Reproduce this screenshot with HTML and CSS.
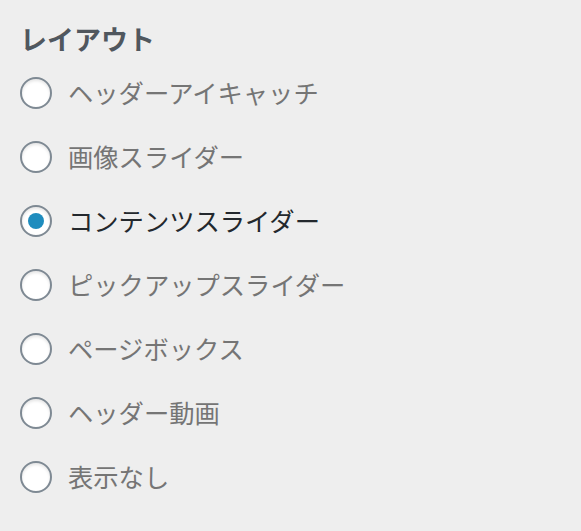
FILE: index.html
```html
<!DOCTYPE html>
<html lang="ja">
<head>
<meta charset="utf-8">
<link rel="stylesheet" href="styles.css">
</head>
<body>
<div class="panel">
  <div class="title">レイアウト</div>
  <ul class="options">
    <li class="option"><span class="radio"></span><span class="label">ヘッダーアイキャッチ</span></li>
    <li class="option"><span class="radio"></span><span class="label">画像スライダー</span></li>
    <li class="option checked"><span class="radio"></span><span class="label">コンテンツスライダー</span></li>
    <li class="option"><span class="radio"></span><span class="label">ピックアップスライダー</span></li>
    <li class="option"><span class="radio"></span><span class="label">ページボックス</span></li>
    <li class="option"><span class="radio"></span><span class="label">ヘッダー動画</span></li>
    <li class="option"><span class="radio"></span><span class="label">表示なし</span></li>
  </ul>
</div>
</body>
</html>
```
FILE: styles.css
```css
html, body {
  margin: 0;
  padding: 0;
  background: #eeeeee;
  width: 581px;
  height: 531px;
  overflow: hidden;
}
.panel {
  padding: 19px 0 0 20px;
  font-family: "Noto Sans CJK JP", "Noto Sans", sans-serif;
}
.title {
  font-size: 27px;
  font-weight: 700;
  line-height: 40px;
  color: #50575e;
  height: 42px;
}
.options {
  list-style: none;
  margin: 0;
  padding: 0;
}
.option {
  display: flex;
  align-items: center;
  height: 64px;
  gap: 16px;
}
.radio {
  box-sizing: border-box;
  width: 32px;
  height: 32px;
  border-radius: 50%;
  border: 2px solid #7e8993;
  background: #fff;
  box-shadow: inset 0 2px 3px rgba(0,0,0,0.1);
  display: flex;
  align-items: center;
  justify-content: center;
  flex: none;
}
.checked .radio::after {
  content: "";
  width: 16px;
  height: 16px;
  border-radius: 50%;
  background: #1e8cbe;
}
.label {
  font-size: 25.3px;
  color: #757575;
  line-height: 1;
}
.checked .label {
  color: #23282d;
}
```
